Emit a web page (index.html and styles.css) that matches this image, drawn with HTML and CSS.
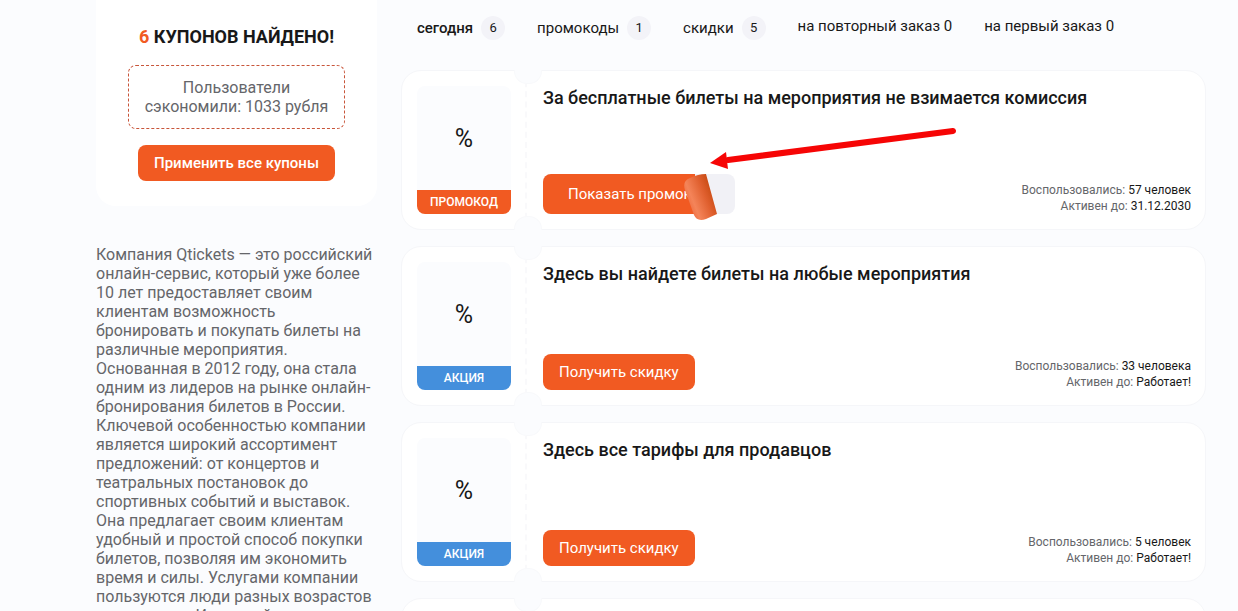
FILE: index.html
```html
<!DOCTYPE html>
<html lang="ru">
<head>
    <meta charset="UTF-8">
    <meta name="viewport" content="width=device-width, initial-scale=1.0">
    <title>Купоны Qtickets</title>
    <link rel="stylesheet" href="styles.css">
</head>
<body>
    <main class="container">
        <aside class="sidebar">
            <div class="summary">
                <h2><span>6</span> КУПОНОВ НАЙДЕНО!</h2>
                <p class="saved">Пользователи сэкономили: 1033 рубля</p>
                <button type="button" class="btn">Применить все купоны</button>
            </div>
            <p class="about">Компания Qtickets — это российский онлайн-сервис, который уже более 10 лет предоставляет своим клиентам возможность бронировать и покупать билеты на различные мероприятия. Основанная в 2012 году, она стала одним из лидеров на рынке онлайн-бронирования билетов в России. Ключевой особенностью компании является широкий ассортимент предложений: от концертов и театральных постановок до спортивных событий и выставок. Она предлагает своим клиентам удобный и простой способ покупки билетов, позволяя им экономить время и силы. Услугами компании пользуются люди разных возрастов и интересов. И каждый</p>
        </aside>

        <div class="content">
            <nav class="filters">
                <a href="#" class="active">сегодня <span class="count">6</span></a>
                <a href="#">промокоды <span class="count">1</span></a>
                <a href="#">скидки <span class="count">5</span></a>
                <a href="#" class="empty">на повторный заказ 0</a>
                <a href="#" class="empty">на первый заказ 0</a>
            </nav>

            <div class="coupons">
                <article class="coupon">
                    <div class="coupon-left">
                        <div class="logo">%</div>
                        <div class="label promo">ПРОМОКОД</div>
                    </div>
                    <div class="coupon-right">
                        <h3>За бесплатные билеты на мероприятия не взимается комиссия</h3>
                        <div class="coupon-bottom">
                            <button type="button" class="peel">
                                <span class="peel-text">Показать промокод</span>
                                <svg class="peel-corner" width="34" height="46" viewBox="0 0 34 46">
                                    <defs>
                                        <linearGradient id="curl" x1="0.1" y1="0.75" x2="0.9" y2="0.3">
                                            <stop offset="0" stop-color="#ee6a3c"/>
                                            <stop offset="0.25" stop-color="#f48459"/>
                                            <stop offset="0.65" stop-color="#e0602f"/>
                                            <stop offset="1" stop-color="#c5480f"/>
                                        </linearGradient>
                                    </defs>
                                    <path d="M22 0 L33 40 L22 45 Q13 48 10 41 L1 16 Q-2 7 6 4 Q14 0 22 0 Z" fill="url(#curl)"/>
                                </svg>
                            </button>
                            <p class="info">Воспользовались: <b>57 человек</b><br>Активен до: <b>31.12.2030</b></p>
                        </div>
                        <!-- arrow pointing at the button -->
                        <svg class="arrow" width="247" height="44" viewBox="0 0 247 44">
                            <path d="M18 33 L243 4" stroke="#f60505" stroke-width="6" stroke-linecap="round"/>
                            <path d="M0 36 L16 25 L18 42 Z" fill="#f60505"/>
                        </svg>
                    </div>
                </article>

                <article class="coupon">
                    <div class="coupon-left">
                        <div class="logo">%</div>
                        <div class="label">АКЦИЯ</div>
                    </div>
                    <div class="coupon-right">
                        <h3>Здесь вы найдете билеты на любые мероприятия</h3>
                        <div class="coupon-bottom">
                            <button type="button" class="btn">Получить скидку</button>
                            <p class="info">Воспользовались: <b>33 человека</b><br>Активен до: <b>Работает!</b></p>
                        </div>
                    </div>
                </article>

                <article class="coupon">
                    <div class="coupon-left">
                        <div class="logo">%</div>
                        <div class="label">АКЦИЯ</div>
                    </div>
                    <div class="coupon-right">
                        <h3>Здесь все тарифы для продавцов</h3>
                        <div class="coupon-bottom">
                            <button type="button" class="btn">Получить скидку</button>
                            <p class="info">Воспользовались: <b>5 человек</b><br>Активен до: <b>Работает!</b></p>
                        </div>
                    </div>
                </article>

                <article class="coupon">
                    <div class="coupon-left"></div>
                    <div class="coupon-right"></div>
                </article>
            </div>
        </div>
    </main>
</body>
</html>
```
FILE: styles.css
```css
*{
    box-sizing: border-box;
}
body{
    margin: 0;
    height: 100vh;
    overflow: hidden;
    background-color: #fbfcfe;
    color: #181818;
    font-family: Roboto, "Liberation Sans", sans-serif;
    font-size: 16px;
    line-height: 19px;
}
h2,h3,p{
    margin: 0;
}
button{
    font-family: inherit;
    border: none;
    cursor: pointer;
}
.container{
    display: grid;
    grid-template-columns: 281px 1fr;
    gap: 24px;
    padding: 0 32px 0 96px;
}

/* sidebar */
.summary{
    display: flex;
    flex-direction: column;
    align-items: center;
    padding: 27px 32px 25px;
    background-color: #fff;
    border-radius: 0 0 20px 20px;
}
.summary h2{
    font-size: 18px;
    line-height: 20px;
    font-weight: 700;
    margin-bottom: 18px;
}
.summary h2 span{
    color: #f15a22;
}
.saved{
    width: 100%;
    padding: 12px 8px;
    margin-bottom: 16px;
    border: 1px dashed #c8553a;
    border-radius: 8px;
    text-align: center;
    color: #65666a;
}
.btn{
    height: 36px;
    padding: 0 16px;
    border-radius: 8px;
    background-color: #f15a22;
    color: #fff;
    font-size: 15px;
    font-weight: 500;
}
.about{
    margin-top: 39px;
    color: #65666a;
}

/* filters */
.filters{
    display: flex;
    gap: 32px;
    padding: 16px 16px 0;
    height: 70px;
}
.filters a{
    display: flex;
    align-items: center;
    gap: 8px;
    height: 24px;
    color: #181818;
    font-size: 15px;
    text-decoration: none;
}
.filters .active{
    font-weight: 500;
}
.filters .empty{
    height: 20px;
}
.count{
    width: 24px;
    border-radius: 50%;
    background-color: #f3f3f8;
    font-size: 13px;
    font-weight: 400;
    line-height: 24px;
    text-align: center;
}

/* coupons */
.coupons{
    display: flex;
    flex-direction: column;
    gap: 16px;
}
.coupon{
    position: relative;
    display: flex;
    min-height: 160px;
    border: 1px solid #f5f6f9;
    border-radius: 20px;
    background-color: #fff;
}
/* ticket notches */
.coupon::before,.coupon::after{
    content: "";
    position: absolute;
    left: 112px;
    width: 26px;
    height: 13px;
    background-color: #fbfcfe;
    border: 1px solid #f8f9fb;
}
.coupon::before{
    top: -1px;
    border-top: none;
    border-radius: 0 0 13px 13px;
}
.coupon::after{
    bottom: -1px;
    border-bottom: none;
    border-radius: 13px 13px 0 0;
}
.coupon-left{
    display: flex;
    flex-direction: column;
    width: 125px;
    padding: 15px 14px 15px 15px;
    border-right: 2px dashed #f9f9fb;
}
.logo{
    flex: 1;
    display: flex;
    align-items: center;
    justify-content: center;
    border-radius: 8px 8px 0 0;
    background-color: #fbfcfe;
    font-size: 25px;
}
.label{
    height: 24px;
    border-radius: 0 0 8px 8px;
    background-color: #448fdc;
    color: #fff;
    font-size: 12px;
    font-weight: 500;
    line-height: 24px;
    text-align: center;
}
.label.promo{
    background-color: #f15a22;
}
.coupon-right{
    flex: 1;
    display: flex;
    flex-direction: column;
    justify-content: space-between;
    padding: 15px 14px 15px 16px;
}
.coupon-right h3{
    font-size: 18px;
    line-height: 24px;
    font-weight: 500;
}
.coupon-bottom{
    display: flex;
    align-items: flex-end;
    justify-content: space-between;
}
.coupon-bottom .btn{
    font-weight: 400;
}
.info{
    color: #65666a;
    font-size: 12px;
    line-height: 16px;
    text-align: right;
}
.info b{
    color: #181818;
    font-weight: 400;
}

/* button with the peeled corner */
.peel{
    position: relative;
    width: 192px;
    height: 40px;
    padding: 0;
    border-radius: 8px;
    background-color: #f1f1f6;
    text-align: left;
}
.peel-text{
    display: block;
    width: 152px;
    padding-left: 25px;
    overflow: hidden;
    border-radius: 8px 0 0 8px;
    background-color: #f15a22;
    color: #fff;
    font-size: 15px;
    line-height: 40px;
    font-weight: 400;
    white-space: nowrap;
}
.peel-corner{
    position: absolute;
    left: 141px;
    top: 0;
}
.arrow{
    position: absolute;
    left: 308px;
    top: 56px;
}
```
